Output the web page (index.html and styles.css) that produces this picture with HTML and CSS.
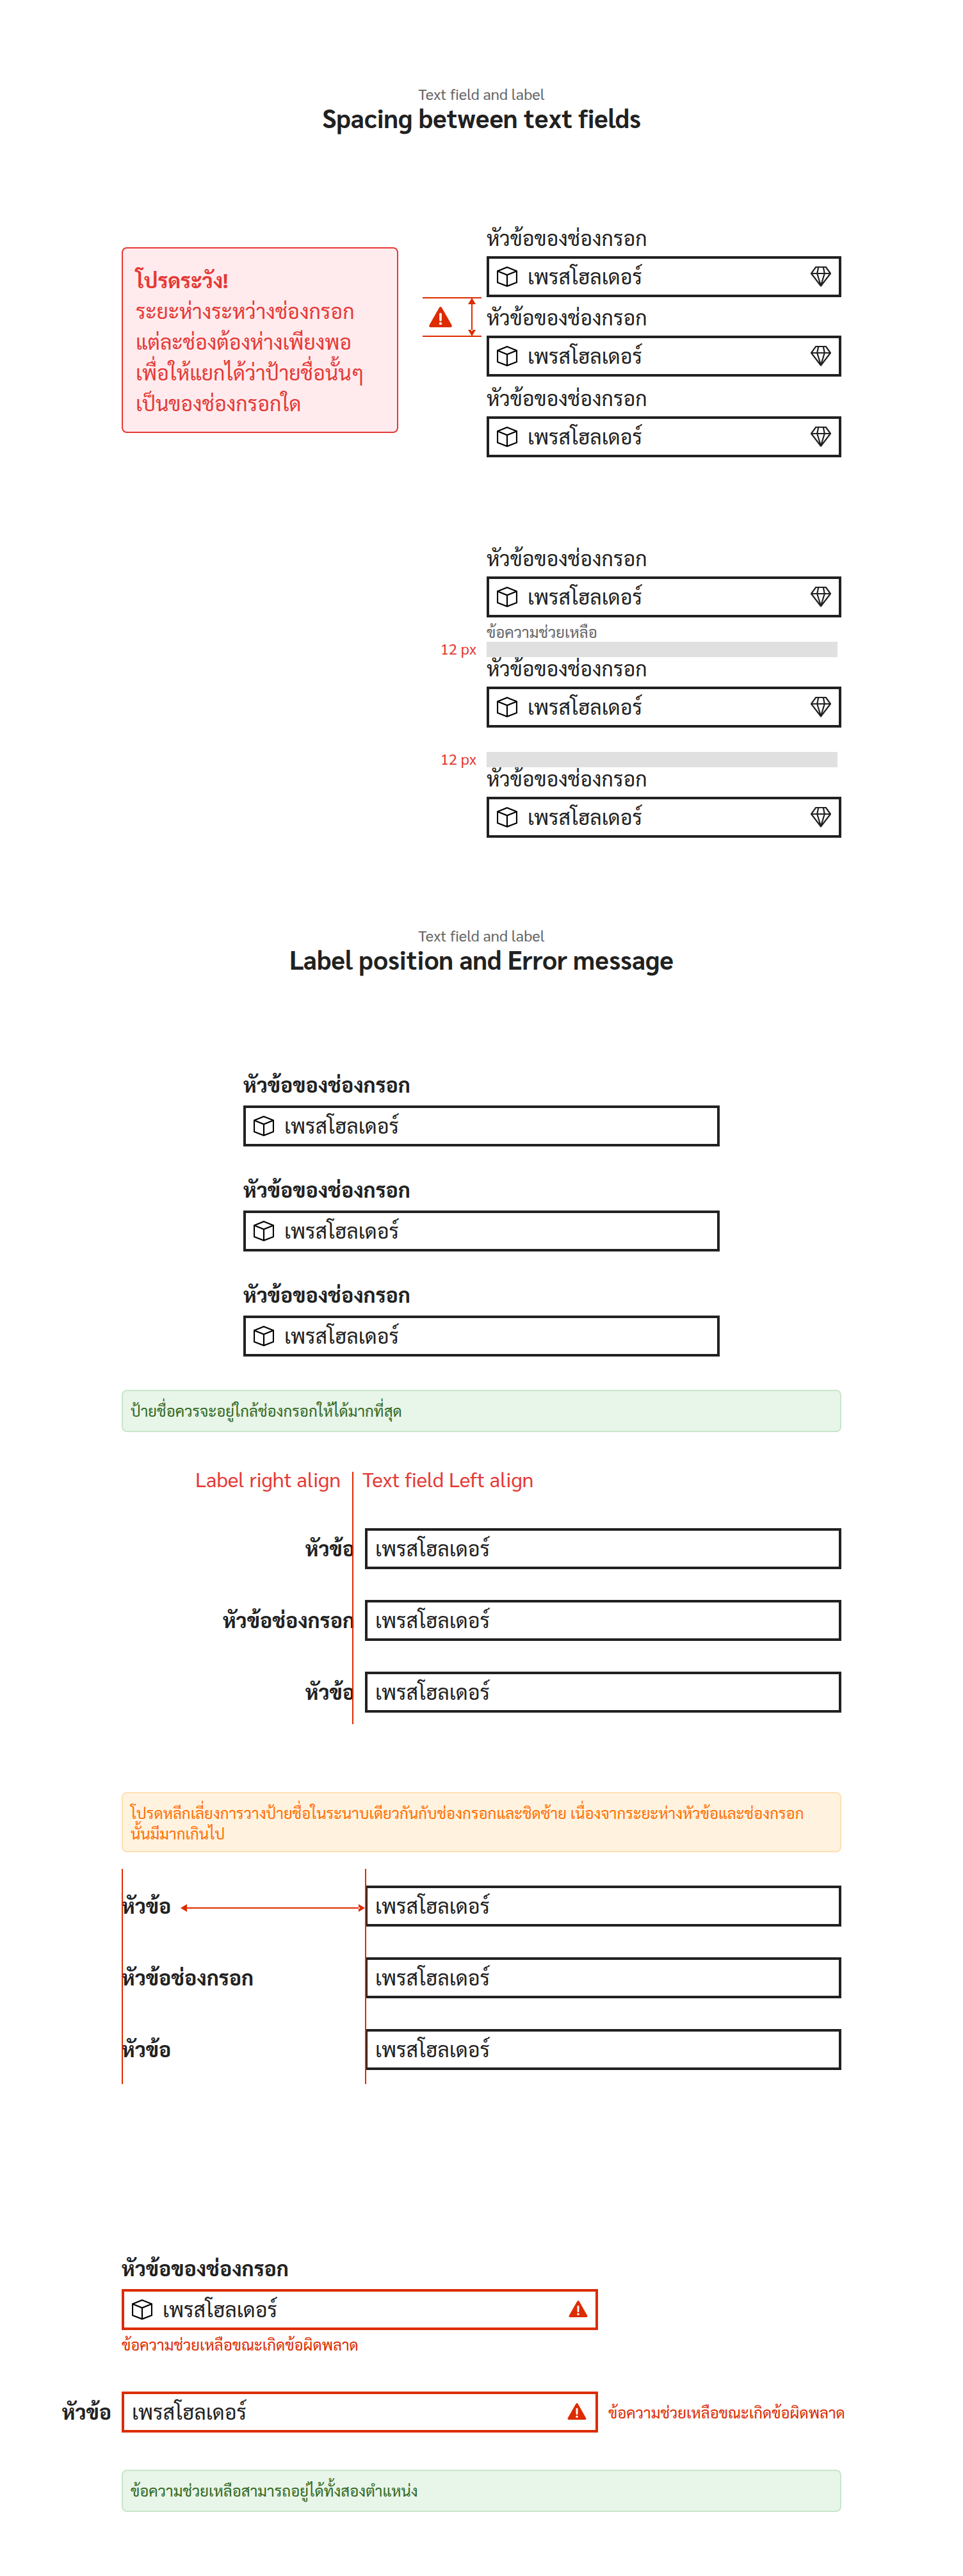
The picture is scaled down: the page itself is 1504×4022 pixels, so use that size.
FILE: index.html
```html
<!DOCTYPE html>
<html lang="th">
<head>
<meta charset="utf-8">
<title>Text field and label</title>
<link rel="stylesheet" href="styles.css">
</head>
<body>
<svg class="sprite" aria-hidden="true">
  <symbol id="cube" viewBox="0 0 32 32"><path d="M16 1.2 31 7.2V25L16 30.8 1 25V7.2ZM1 7.2 16 13.2 31 7.2M16 13.2V30.8" fill="none" stroke="currentColor" stroke-width="2.2"/></symbol>
  <symbol id="gem" viewBox="0 0 32 32"><path d="M8.2 1H23.8L31 11 16 30.5 1 11ZM1 11H31M12.2 1 10.2 11 16 30 21.8 11 19.8 1" fill="none" stroke="currentColor" stroke-width="2.2" stroke-linejoin="round"/></symbol>
  <symbol id="alert" viewBox="0 0 36 32"><path d="M16.2 1.1Q18-.9 19.8 1.1C21 3 35 27.500 35.700 29.200Q36.200 31.700 33.700 32H2.300Q-.2 31.700.3 29.200C1 27.500 15 3 16.200 1.100Z" fill="#dd2c00"/><rect x="16.200" y="9.500" width="3.600" height="13" rx="1.800" fill="#fff"/><circle cx="18" cy="26.200" r="2.100" fill="#fff"/></symbol>
</svg>
<main>
  <header class="heading">
    <p>Text field and label</p>
    <h1>Spacing between text fields</h1>
  </header>

  <section class="compare">
    <div class="caution">
      <strong>โปรดระวัง!</strong><br>ระยะห่างระหว่างช่องกรอก<br>แต่ละช่องต้องห่างเพียงพอ<br>เพื่อให้แยกได้ว่าป้ายชื่อนั้นๆ<br>เป็นของช่องกรอกใด
    </div>
    <div class="measure">
      <svg class="alert-lg"><use href="#alert"/></svg>
      <svg class="varrow" viewBox="0 0 12 60"><path d="M5 8H7V52H5ZM6 0 12 10H0ZM6 60 12 50H0Z" fill="#dd2c00"/></svg>
    </div>
    <div class="tight">
      <div class="group">
        <div class="label">หัวข้อของช่องกรอก</div>
        <div class="field"><svg class="icon cube"><use href="#cube"/></svg><span>เพรสโฮลเดอร์</span><svg class="icon end"><use href="#gem"/></svg></div>
      </div>
      <div class="group">
        <div class="label">หัวข้อของช่องกรอก</div>
        <div class="field"><svg class="icon cube"><use href="#cube"/></svg><span>เพรสโฮลเดอร์</span><svg class="icon end"><use href="#gem"/></svg></div>
      </div>
      <div class="group">
        <div class="label">หัวข้อของช่องกรอก</div>
        <div class="field"><svg class="icon cube"><use href="#cube"/></svg><span>เพรสโฮลเดอร์</span><svg class="icon end"><use href="#gem"/></svg></div>
      </div>
    </div>
  </section>

  <section class="spaced">
    <div class="group">
      <div class="label">หัวข้อของช่องกรอก</div>
      <div class="field"><svg class="icon cube"><use href="#cube"/></svg><span>เพรสโฮลเดอร์</span><svg class="icon end"><use href="#gem"/></svg></div>
      <div class="helper">ข้อความช่วยเหลือ</div>
    </div>
    <div class="gap-size">12 px</div><div class="gap-bar"></div>
    <div class="group">
      <div class="label">หัวข้อของช่องกรอก</div>
      <div class="field"><svg class="icon cube"><use href="#cube"/></svg><span>เพรสโฮลเดอร์</span><svg class="icon end"><use href="#gem"/></svg></div>
      <div class="helper"></div>
    </div>
    <div class="gap-size">12 px</div><div class="gap-bar"></div>
    <div class="group">
      <div class="label">หัวข้อของช่องกรอก</div>
      <div class="field"><svg class="icon cube"><use href="#cube"/></svg><span>เพรสโฮลเดอร์</span><svg class="icon end"><use href="#gem"/></svg></div>
    </div>
  </section>

  <header class="heading">
    <p>Text field and label</p>
    <h1>Label position and Error message</h1>
  </header>

  <section class="stacked">
    <div class="group bold">
      <div class="label">หัวข้อของช่องกรอก</div>
      <div class="field"><svg class="icon cube"><use href="#cube"/></svg><span>เพรสโฮลเดอร์</span></div>
    </div>
    <div class="group bold">
      <div class="label">หัวข้อของช่องกรอก</div>
      <div class="field"><svg class="icon cube"><use href="#cube"/></svg><span>เพรสโฮลเดอร์</span></div>
    </div>
    <div class="group bold">
      <div class="label">หัวข้อของช่องกรอก</div>
      <div class="field"><svg class="icon cube"><use href="#cube"/></svg><span>เพรสโฮลเดอร์</span></div>
    </div>
  </section>

  <div class="notice good">ป้ายชื่อควรจะอยู่ใกล้ช่องกรอกให้ได้มากที่สุด</div>

  <section class="align-right">
    <div class="align-titles"><span>Label right align</span><span>Text field Left align</span></div>
    <div class="rows">
      <div class="side-label">หัวข้อ</div><div class="field"><span>เพรสโฮลเดอร์</span></div>
      <div class="side-label">หัวข้อช่องกรอก</div><div class="field"><span>เพรสโฮลเดอร์</span></div>
      <div class="side-label">หัวข้อ</div><div class="field"><span>เพรสโฮลเดอร์</span></div>
    </div>
    <i class="guide"></i>
  </section>

  <div class="notice avoid">โปรดหลีกเลี่ยงการวางป้ายชื่อในระนาบเดียวกันกับช่องกรอกและชิดซ้าย เนื่องจากระยะห่างหัวข้อและช่องกรอก<br>นั้นมีมากเกินไป</div>

  <section class="align-left">
    <div class="rows">
      <div class="side-label">หัวข้อ</div><div class="field"><span>เพรสโฮลเดอร์</span></div>
      <div class="side-label">หัวข้อช่องกรอก</div><div class="field"><span>เพรสโฮลเดอร์</span></div>
      <div class="side-label">หัวข้อ</div><div class="field"><span>เพรสโฮลเดอร์</span></div>
    </div>
    <i class="guide start"></i>
    <i class="guide mid"></i>
    <svg class="harrow" viewBox="0 0 288 12"><path d="M8 5H280V7H8ZM0 6 10 0V12ZM288 6 278 0V12Z" fill="#dd2c00"/></svg>
  </section>

  <section class="errors">
    <div class="group bold">
      <div class="label">หัวข้อของช่องกรอก</div>
      <div class="field invalid"><svg class="icon cube"><use href="#cube"/></svg><span>เพรสโฮลเดอร์</span><svg class="alert-sm end"><use href="#alert"/></svg></div>
      <div class="helper invalid">ข้อความช่วยเหลือขณะเกิดข้อผิดพลาด</div>
    </div>
    <div class="error-row">
      <div class="side-label">หัวข้อ</div>
      <div class="field invalid"><span>เพรสโฮลเดอร์</span><svg class="alert-sm end"><use href="#alert"/></svg></div>
      <div class="helper invalid">ข้อความช่วยเหลือขณะเกิดข้อผิดพลาด</div>
    </div>
  </section>

  <div class="notice good last">ข้อความช่วยเหลือสามารถอยู่ได้ทั้งสองตำแหน่ง</div>
</main>
</body>
</html>
```
FILE: styles.css
```css
* { box-sizing: border-box; }
body {
  margin: 0;
  background: #fff;
  color: #212121;
  font: 32px/42px Sarabun, "Noto Sans Thai", "Noto Sans", sans-serif;
  white-space: nowrap;
}
main { width: 1124px; height: 4022px; margin: 0 auto; padding-top: 130px; }
.sprite { position: absolute; width: 0; height: 0; }
svg { display: block; flex: none; }

.heading { text-align: center; }
.heading p { margin: 0; font-size: 24px; line-height: 32px; color: #666; }
.heading h1 { margin: 0; font-size: 40px; line-height: 42px; font-weight: 700; }

.label { height: 42px; margin-bottom: 8px; }
.bold .label { font-weight: 700; margin-bottom: 12px; }
.field {
  display: flex;
  align-items: center;
  height: 64px;
  padding: 0 12px;
  border: 4px solid #212121;
}
.field span { padding-bottom: 3px; }
.field.invalid { border-color: #dd2c00; }
.icon { width: 32px; height: 32px; }
.cube { margin-right: 16px; color: #000; }
.end { margin-left: auto; }
.helper { height: 32px; margin-top: 6px; font-size: 24px; line-height: 32px; color: #666; }
.helper.invalid { color: #dd2c00; }

.compare {
  display: grid;
  grid-template-columns: 432px 92px 554px;
  column-gap: 38px;
  align-items: start;
  margin-top: 146px;
}
.caution {
  height: 290px;
  margin-top: 36px;
  padding: 25px 20px;
  border: 2px solid #e53935;
  border-radius: 8px;
  background: #ffebee;
  color: #e53935;
  line-height: 48px;
}
.measure {
  display: flex;
  align-items: center;
  justify-content: space-between;
  height: 62px;
  margin-top: 114px;
  padding: 0 9px 0 10px;
  border: solid #dd2c00;
  border-width: 2px 0;
}
.alert-lg { width: 36px; height: 32px; }
.varrow { width: 12px; height: 60px; }
.tight { margin-left: -30px; width: 554px; }
.tight .group + .group { margin-top: 10px; }
.tight .group:last-child { margin-top: 12px; }

.spaced {
  display: grid;
  grid-template-columns: 554px 554px;
  column-gap: 16px;
  margin-top: 136px;
}
.spaced .group { grid-column: 2; }
.spaced .gap-bar + .group { margin-top: -4px; }
.gap-size { height: 24px; text-align: right; font-size: 24px; line-height: 20px; color: #e53935; }
.gap-bar { z-index: 1; width: 548px; height: 24px; background: #e0e0e0; }
.spaced + .heading { margin-top: 136px; }

.stacked { width: 744px; margin: 154px auto 0; display: grid; gap: 46px; }

.notice {
  margin-top: 52px;
  padding: 14px 12px 16px;
  border: 2px solid;
  border-radius: 8px;
  font-size: 24px;
  line-height: 32px;
}
.good { color: #33691e; background: #e8f5e9; border-color: #c8e6c9; }
.avoid { margin-top: 124px; padding-bottom: 12px; color: #ff6f00; background: #fff3e0; border-color: #ffe0b2; }
.notice.last { margin-top: 58px; }

.align-right, .align-left { position: relative; margin-top: 52px; }
.align-titles { display: grid; grid-template-columns: 342px 1fr; column-gap: 34px; margin-bottom: 56px; color: #e53935; }
.align-titles span:first-child { text-align: right; }
.rows { display: grid; grid-template-columns: 364px 744px; gap: 48px 16px; }
.side-label { height: 64px; line-height: 61px; font-weight: 700; text-align: right; }
.align-left .side-label { text-align: left; }
.guide { position: absolute; left: 360px; top: 10px; bottom: -18px; width: 2px; background: #dd2c00; }
.guide.start { left: 0; top: -26px; bottom: -22px; }
.guide.mid { left: 380px; top: -26px; bottom: -22px; }
.harrow { position: absolute; left: 92px; top: 29px; width: 288px; height: 12px; }

.errors { margin-top: 288px; }
.errors .group { width: 744px; }
.error-row {
  display: grid;
  grid-template-columns: 78px 744px auto;
  column-gap: 16px;
  margin: 58px 0 0 -94px;
}
.error-row .helper { margin-top: 16px; }
.error-row .alert-sm { margin-right: 2px; }
.alert-sm { width: 30px; height: 26px; margin-bottom: 2px; }
```
